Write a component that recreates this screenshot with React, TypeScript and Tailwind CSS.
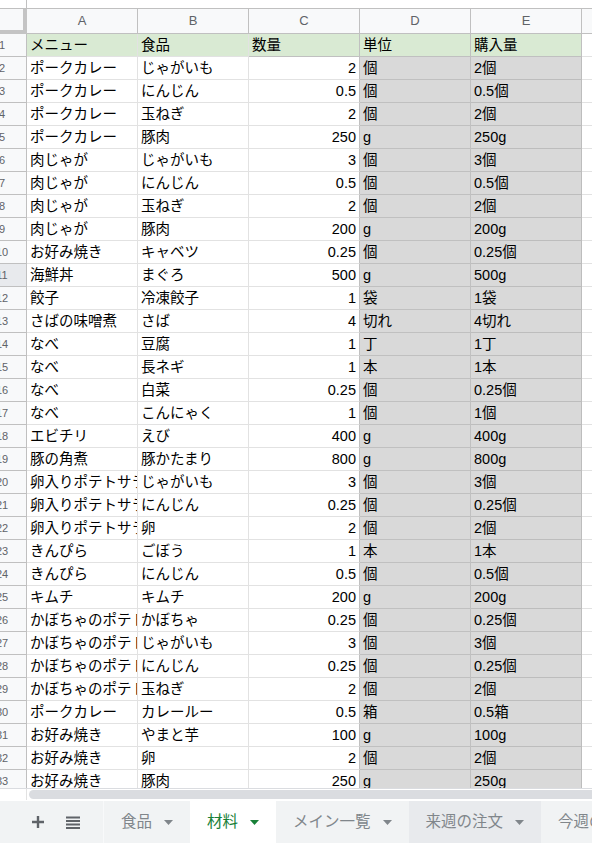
type Row = [string, string, string, string, string];

const rows: Row[] = [
  ['ポークカレー', 'じゃがいも', '2', '個', '2個'],
  ['ポークカレー', 'にんじん', '0.5', '個', '0.5個'],
  ['ポークカレー', '玉ねぎ', '2', '個', '2個'],
  ['ポークカレー', '豚肉', '250', 'g', '250g'],
  ['肉じゃが', 'じゃがいも', '3', '個', '3個'],
  ['肉じゃが', 'にんじん', '0.5', '個', '0.5個'],
  ['肉じゃが', '玉ねぎ', '2', '個', '2個'],
  ['肉じゃが', '豚肉', '200', 'g', '200g'],
  ['お好み焼き', 'キャベツ', '0.25', '個', '0.25個'],
  ['海鮮丼', 'まぐろ', '500', 'g', '500g'],
  ['餃子', '冷凍餃子', '1', '袋', '1袋'],
  ['さばの味噌煮', 'さば', '4', '切れ', '4切れ'],
  ['なべ', '豆腐', '1', '丁', '1丁'],
  ['なべ', '長ネギ', '1', '本', '1本'],
  ['なべ', '白菜', '0.25', '個', '0.25個'],
  ['なべ', 'こんにゃく', '1', '個', '1個'],
  ['エビチリ', 'えび', '400', 'g', '400g'],
  ['豚の角煮', '豚かたまり', '800', 'g', '800g'],
  ['卵入りポテトサラダ', 'じゃがいも', '3', '個', '3個'],
  ['卵入りポテトサラダ', 'にんじん', '0.25', '個', '0.25個'],
  ['卵入りポテトサラダ', '卵', '2', '個', '2個'],
  ['きんぴら', 'ごぼう', '1', '本', '1本'],
  ['きんぴら', 'にんじん', '0.5', '個', '0.5個'],
  ['キムチ', 'キムチ', '200', 'g', '200g'],
  ['かぼちゃのポテトサラダ', 'かぼちゃ', '0.25', '個', '0.25個'],
  ['かぼちゃのポテトサラダ', 'じゃがいも', '3', '個', '3個'],
  ['かぼちゃのポテトサラダ', 'にんじん', '0.25', '個', '0.25個'],
  ['かぼちゃのポテトサラダ', '玉ねぎ', '2', '個', '2個'],
  ['ポークカレー', 'カレールー', '0.5', '箱', '0.5箱'],
  ['お好み焼き', 'やまと芋', '100', 'g', '100g'],
  ['お好み焼き', '卵', '2', '個', '2個'],
  ['お好み焼き', '豚肉', '250', 'g', '250g'],
];

const font = { fontFamily: '"Liberation Sans", Arial, "Noto Sans CJK JP", sans-serif' };

const Caret = ({ className }: { className: string }) => (
  <svg width="9" height="5" viewBox="0 0 9 5" className={className}>
    <path d="M0 0h9L4.5 5z" fill="currentColor" />
  </svg>
);

const RowNum = ({ n, active }: { n: number; active?: boolean }) => (
  <div
    className={`w-[27px] shrink-0 overflow-hidden border-r border-b border-[#c0c0c0] ${
      active ? 'bg-[#e8eaed]' : 'bg-[#f8f9fa]'
    }`}
  >
    <div className="-ml-[21px] w-[46px] text-center text-[11px] leading-[22px] text-[#5f6368]">{n}</div>
  </div>
);

const Tab = ({ label, active, hover }: { label: string; active?: boolean; hover?: boolean }) => (
  <div
    className={`flex h-full items-center gap-[12px] px-[17px] shrink-0 ${
      active ? 'bg-white text-[#188038]' : hover ? 'bg-[#e8eaed] text-[#80868b]' : 'text-[#80868b]'
    }`}
  >
    <span className="text-[15.5px] whitespace-nowrap">{label}</span>
    <Caret className={active ? 'text-[#188038]' : 'text-[#80868b]'} />
  </div>
);

export default function App() {
  return (
    <div className="w-[592px] h-[843px] flex flex-col overflow-hidden bg-white text-black" style={font}>
      {/* formula bar edge */}
      <div className="h-[9px] shrink-0 flex border-b border-[#c0c0c0]">
        <div className="w-[27px] border-r border-[#c0c0c0]" />
      </div>

      {/* column letters */}
      <div className="h-[25px] shrink-0 flex bg-[#f8f9fa] text-[13px] text-[#5f6368]">
        <div className="w-[27px] shrink-0 border-r-[4px] border-b-[4px] border-[#c4c4c4]" />
        {['A', 'B', 'C', 'D', 'E'].map((c) => (
          <div
            key={c}
            className="w-[111px] shrink-0 flex items-center justify-center border-r border-b border-[#c0c0c0]"
          >
            {c}
          </div>
        ))}
        <div className="flex-1 border-b border-[#c0c0c0]" />
      </div>

      {/* cells */}
      <div className="flex-1 overflow-hidden text-[14.5px] leading-[22px]">
        <div className="flex h-[23px]">
          <RowNum n={1} />
          {['メニュー', '食品', '数量', '単位', '購入量'].map((h, i) => (
            <div
              key={h}
              className={`w-[111px] shrink-0 px-[3px] bg-[#d9ead3] border-b border-r whitespace-nowrap overflow-hidden ${
                i < 2 ? 'border-[#e2e2e2]' : 'border-[#c0c0c0]'
              }`}
            >
              {h}
            </div>
          ))}
          <div className="flex-1 border-b border-[#e2e2e2]" />
        </div>
        {rows.map((r, i) => (
          <div key={i} className="flex h-[23px]">
            <RowNum n={i + 2} active={i + 2 === 11} />
            <div className="w-[111px] shrink-0 px-[3px] border-b border-r border-[#e2e2e2] whitespace-nowrap overflow-hidden">
              {r[0]}
            </div>
            <div className="w-[111px] shrink-0 px-[3px] border-b border-r border-[#e2e2e2] whitespace-nowrap overflow-hidden">
              {r[1]}
            </div>
            <div className="w-[111px] shrink-0 px-[3px] border-b border-r border-b-[#e2e2e2] border-r-[#c0c0c0] text-right">
              {r[2]}
            </div>
            <div className="w-[111px] shrink-0 px-[3px] bg-[#d9d9d9] border-b border-r border-[#c0c0c0] whitespace-nowrap">
              {r[3]}
            </div>
            <div className="w-[111px] shrink-0 px-[3px] bg-[#d9d9d9] border-b border-r border-[#bdbdbd] whitespace-nowrap">
              {r[4]}
            </div>
            <div className="flex-1 border-b border-[#e2e2e2]" />
          </div>
        ))}
      </div>

      {/* horizontal scrollbar */}
      <div className="h-[13px] shrink-0 flex border-t border-[#dadce0] border-b border-b-white">
        <div className="w-[27px] shrink-0 border-r border-[#e2e2e2]" />
        <div className="flex-1 pl-[2px] py-[1px]">
          <div className="h-full rounded-l-full bg-[#dadce0]" />
        </div>
      </div>

      {/* sheet tabs */}
      <div className="h-[42px] shrink-0 flex items-center bg-[#f1f3f4]">
        <div className="w-[104px] shrink-0 h-full flex items-center border-r border-[#f8f9fa]">
          <div className="w-[54px] flex justify-center pl-[22px]">
            <svg width="12" height="12" viewBox="0 0 12 12">
              <path d="M6 0v12M0 6h12" stroke="#5f6368" strokeWidth="2.4" />
            </svg>
          </div>
          <div className="ml-[12px]">
            <svg width="14" height="13" viewBox="0 0 14 13">
              <rect x="0" y="0.5" width="14" height="2" fill="#5f6368" />
              <rect x="0" y="4" width="14" height="2" fill="#5f6368" />
              <rect x="0" y="7.5" width="14" height="2" fill="#5f6368" />
              <rect x="0" y="11" width="14" height="2" fill="#5f6368" />
            </svg>
          </div>
        </div>
        <Tab label="食品" />
        <Tab label="材料" active />
        <Tab label="メイン一覧" />
        <Tab label="来週の注文" hover />
        <Tab label="今週の注文" />
      </div>
    </div>
  );
}
